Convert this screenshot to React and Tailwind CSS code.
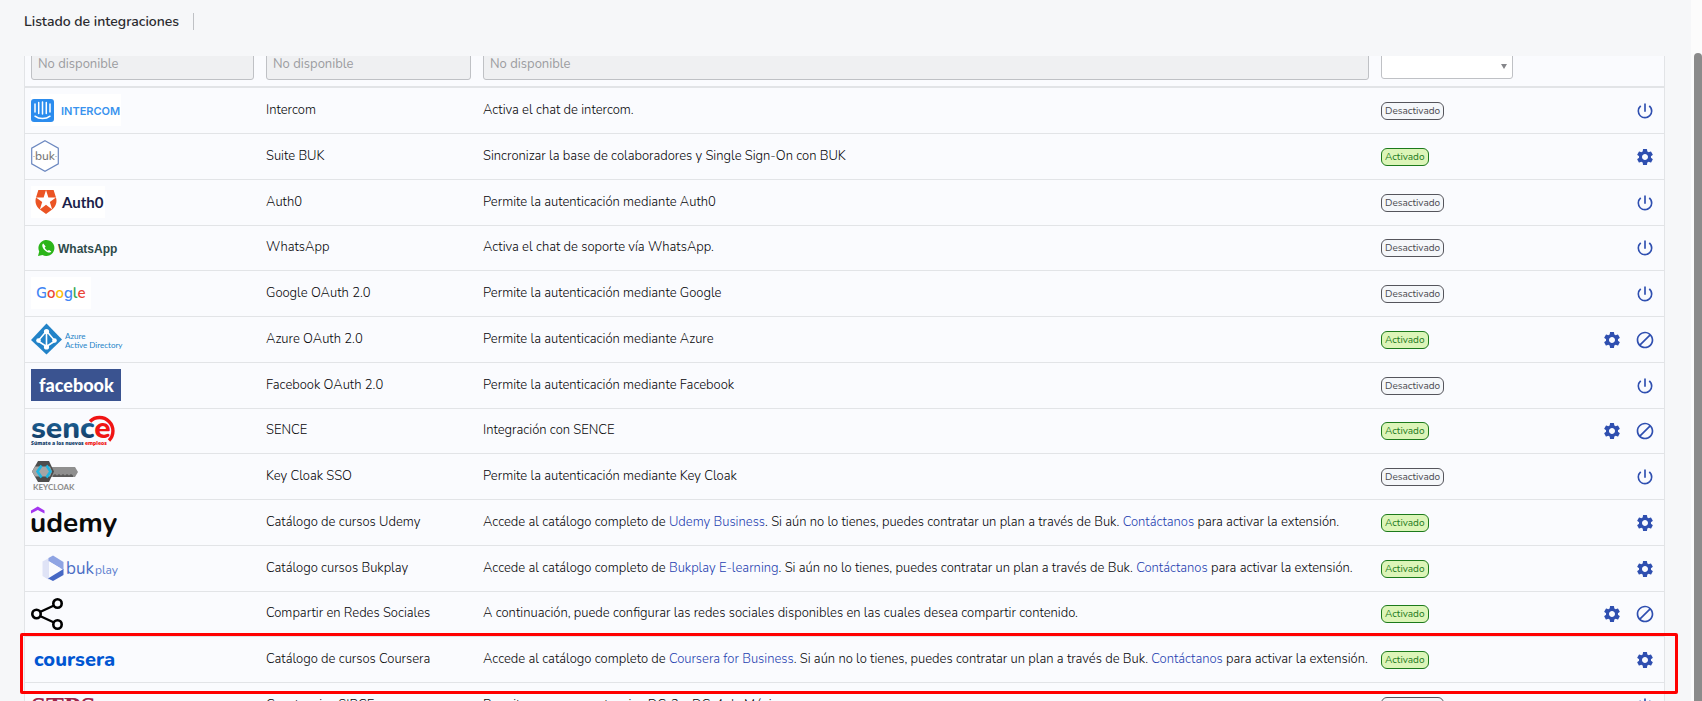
import { MdBlock, MdOutlinePowerSettingsNew, MdSettings } from "react-icons/md";

const IntercomLogo = () => (
  <svg width="90" height="32" viewBox="0 0 90 32" role="img" aria-label="Intercom" className="overflow-visible">
    <rect width="90" height="32" fill="#fff" />
    <rect y="5" width="23" height="23" rx="3" fill="#2b8cee" />
    <path d="M4 10v8M7.7 8.5v11M11.5 8v12M15.3 8.5v11M19 10v8M4 22.2c4 3.2 11 3.2 15 0" stroke="#fff" strokeWidth="1.5" fill="none" strokeLinecap="round" />
    <text x="30" y="21" fill="#3a93ee" className="font-[Inter] text-[11px] font-semibold">INTERCOM</text>
  </svg>
);

const BukLogo = () => (
  <svg width="28" height="32" viewBox="0 0 28 32" role="img" aria-label="Buk" className="overflow-visible">
    <path d="M14 .7 27.300 8.200v15.600L14 31.300.7 23.800V8.200z" fill="#fff" stroke="#6c88c0" strokeWidth="1.200" />
    <text x="14" y="20" textAnchor="middle" fill="#777" className="font-[Nunito,Lato] text-[12px] font-medium">buk</text>
    <path d="M2.500 16.500h1M24.500 16.500h1" stroke="#999" />
  </svg>
);

const Auth0Logo = () => (
  <svg width="74" height="32" viewBox="0 0 74 32" role="img" aria-label="Auth0" className="overflow-visible">
    <rect width="74" height="32" fill="#fff" />
    <path
      transform="translate(3 4)"
      d="M21.98 7.448L19.62 0H4.347L2.02 7.448c-1.352 4.312.03 9.206 3.815 12.015L12.007 24l6.157-4.552c3.755-2.81 5.182-7.688 3.815-12.015l-6.16 4.58 2.343 7.45-6.157-4.597-6.158 4.58 2.358-7.433-6.188-4.55 7.63-.045L12.008 0l2.356 7.404 7.615.044z"
      fill="#eb5424"
    />
    <text x="31" y="22" fill="#1b1f4b" className="font-[Lato] text-[15px] font-bold">Auth0</text>
  </svg>
);

const WhatsAppLogo = () => (
  <svg width="90" height="32" viewBox="0 0 90 32" role="img" aria-label="WhatsApp" className="overflow-visible">
    <path d="M7 24l1.200-4.500A8 8 0 1 1 11.500 23z" fill="#2bb519" />
    <path d="M12.300 11.500c-2 1-.8 4.500 1.500 6.800s5.500 3.200 6.500 1.200l-2.300-1.600-1.400.9c-1.500-.8-2.300-1.900-2.900-3.200l1-1.200z" fill="#fff" />
    <text x="27" y="21" fill="#2d4a4a" className="font-['Liberation_Sans'] text-[12px] font-bold">WhatsApp</text>
  </svg>
);

const GoogleLogo = () => (
  <svg width="60" height="32" viewBox="0 0 60 32" role="img" aria-label="Google" className="overflow-visible">
    <rect width="60" height="32" fill="#fff" />
    <text x="5" y="21" className="font-[Nunito,Lato] text-[15px] font-semibold">
      <tspan fill="#4285f4">G</tspan><tspan fill="#ea4335">o</tspan><tspan fill="#fbbc05">o</tspan><tspan fill="#4285f4">g</tspan><tspan fill="#34a853">l</tspan><tspan fill="#ea4335">e</tspan>
    </text>
  </svg>
);

const AzureLogo = () => (
  <svg width="94" height="32" viewBox="0 0 94 32" role="img" aria-label="Azure Active Directory" className="overflow-visible">
    <path d="M15.500.5 31 16.500 15.500 31.500 0 17z" fill="#2283c8" />
    <path d="M15.500 8 7 18l8.500 5.500L24 18z" fill="none" stroke="#fff" strokeWidth="1.600" />
    <path d="M15.500 8v16" stroke="#fff" strokeWidth="1.600" />
    <circle cx="15.500" cy="8.500" r="2.600" fill="#fff" />
    <circle cx="7.500" cy="17.500" r="2.300" fill="#fff" />
    <circle cx="23.500" cy="17.500" r="2.300" fill="#fff" />
    <circle cx="15.500" cy="24" r="2.600" fill="#fff" />
    <text x="34" y="16" fill="#2283c8" className="font-[Lato] text-[8px] font-normal">Azure</text>
    <text x="34" y="25" fill="#2283c8" className="font-[Lato] text-[8px] font-normal">Active Directory</text>
  </svg>
);

const FacebookLogo = () => (
  <svg width="90" height="32" viewBox="0 0 90 32" role="img" aria-label="Facebook" className="overflow-visible">
    <rect width="90" height="32" fill="#3a5390" />
    <text x="8" y="22.500" fill="#fff" className="font-[Lato] text-[18px] font-black">facebook</text>
  </svg>
);

const SenceLogo = () => (
  <svg width="90" height="32" viewBox="0 0 90 32" role="img" aria-label="SENCE" className="overflow-visible">
    <defs>
      <linearGradient id="sence" x1="0" y1="0" x2="0" y2="1">
        <stop offset="0.300" stopColor="#1d6296" />
        <stop offset="0.800" stopColor="#123a63" />
      </linearGradient>
    </defs>
    <text x="0" y="23" fill="url(#sence)" className="font-[Nunito,Lato] text-[30px] font-extrabold">
      senc<tspan fill="#f01414">e</tspan>
    </text>
    <path d="M59 6.500A12.800 12.800 0 1 1 78 25.500" fill="none" stroke="#f01414" strokeWidth="3.400" />
    <text x="0" y="30" fill="#15416b" className="font-['Noto_Sans'] text-[5px] font-black">Súmate a los nuevos <tspan fill="#f01414">empleos</tspan></text>
  </svg>
);

const KeycloakLogo = () => (
  <svg width="48" height="32" viewBox="0 0 48 32" role="img" aria-label="Keycloak" className="overflow-visible">
    <path d="M20 7h24l3 5-3 5H20z" fill="#8f8f8f" />
    <path d="M22 15.500l2-1.500 2 1.500 2-1.500 2 1.500 2-1.500 2 1.500 2-1.500 2 1.500 2-1.500 2 1.500V17H22z" fill="#5a5a5a" />
    <path d="M7 1h11l5 10.500L18 22H7L1 11.500z" fill="#4d4d4d" />
    <path d="M1 11.500 4 6.500h15l2 5-2 5H4z" fill="#a6a6a6" />
    <path d="M10.500 5.500 6.500 11.500l4 6M15.500 5.500l4 6-4 6" fill="none" stroke="#1fb5e0" strokeWidth="2.600" />
    <text x="2" y="30" fill="#8a8a8a" className="font-[Lato] text-[8px] font-bold">KEYCLOAK</text>
  </svg>
);

const UdemyLogo = () => (
  <svg width="90" height="34" viewBox="0 0 90 34" role="img" aria-label="Udemy" className="overflow-visible">
    <path d="M0 5.500 6.800 1.500l6.700 4v3L6.800 5 0 8.500z" fill="#a435f0" />
    <text x="-1" y="27" fill="#0b0b0b" className="font-[Nunito,Lato] text-[28px] font-bold">udemy</text>
  </svg>
);

const BukplayLogo = () => (
  <svg width="90" height="32" viewBox="0 0 90 32" role="img" aria-label="Bukplay" className="overflow-visible">
    <path d="M11.500 9.500 18 6v22l-6.500-4z" fill="#dfe3f6" />
    <path d="M17.500 6 22 3.500 32.500 10v8L17.500 9z" fill="#8fa4e3" />
    <path d="M32.500 17v6L22 29l-5-2.500z" fill="#4668c4" />
    <path d="M18 9.500 29 16 18 24.500z" fill="#fafbfe" />
    <text x="35" y="22" fill="#4a6dc4" className="font-[Nunito,Lato] text-[17px] font-normal">buk</text>
    <text x="64" y="22" fill="#5f7fce" className="font-[Nunito,Lato] text-[12px] font-normal">play</text>
  </svg>
);

const ShareLogo = () => (
  <svg width="32" height="32" viewBox="0 0 32 32" role="img" aria-label="Compartir" className="overflow-visible">
    <path d="M9 14 23 7.500M9 18l14 6.500" stroke="#000" strokeWidth="2.400" />
    <g fill="none" stroke="#000" strokeWidth="2.600">
      <circle cx="5.500" cy="16" r="4.200" />
      <circle cx="26.500" cy="5.500" r="4.200" />
      <circle cx="26.500" cy="26.500" r="4.200" />
    </g>
  </svg>
);

const CourseraLogo = () => (
  <svg width="90" height="32" viewBox="0 0 90 32" role="img" aria-label="Coursera" className="overflow-visible">
    <text x="3" y="23" fill="#0056d2" className="font-[Nunito,Lato] text-[20px] font-extrabold">coursera</text>
  </svg>
);

const StpsLogo = () => (
  <svg width="90" height="32" viewBox="0 0 90 32" role="img" aria-label="STPS" className="overflow-visible">
    <text x="0" y="27" fill="#9d2449" className="font-['Liberation_Serif'] text-[27px] font-bold">STPS</text>
  </svg>
);

const Ref = ({ children }) => (
  <a href="#" className="text-[#1f3fb0]">{children}</a>
);

const Catalog = ({ name }) => (
  <>
    Accede al catálogo completo de <Ref>{name}</Ref>. Si aún no lo tienes, puedes contratar un plan a través de Buk.{" "}
    <Ref>Contáctanos</Ref> para activar la extensión.
  </>
);

const rows = [
  { logo: IntercomLogo, name: "Intercom", text: "Activa el chat de intercom.", on: false, actions: ["power"] },
  { logo: BukLogo, name: "Suite BUK", text: "Sincronizar la base de colaboradores y Single Sign-On con BUK", on: true, actions: ["gear"] },
  { logo: Auth0Logo, name: "Auth0", text: "Permite la autenticación mediante Auth0", on: false, actions: ["power"] },
  { logo: WhatsAppLogo, name: "WhatsApp", text: "Activa el chat de soporte vía WhatsApp.", on: false, actions: ["power"] },
  { logo: GoogleLogo, name: "Google OAuth 2.0", text: "Permite la autenticación mediante Google", on: false, actions: ["power"] },
  { logo: AzureLogo, name: "Azure OAuth 2.0", text: "Permite la autenticación mediante Azure", on: true, actions: ["gear", "block"] },
  { logo: FacebookLogo, name: "Facebook OAuth 2.0", text: "Permite la autenticación mediante Facebook", on: false, actions: ["power"] },
  { logo: SenceLogo, name: "SENCE", text: "Integración con SENCE", on: true, actions: ["gear", "block"] },
  { logo: KeycloakLogo, name: "Key Cloak SSO", text: "Permite la autenticación mediante Key Cloak", on: false, actions: ["power"] },
  { logo: UdemyLogo, name: "Catálogo de cursos Udemy", text: <Catalog name="Udemy Business" />, on: true, actions: ["gear"] },
  { logo: BukplayLogo, name: "Catálogo cursos Bukplay", text: <Catalog name="Bukplay E-learning" />, on: true, actions: ["gear"] },
  { logo: ShareLogo, name: "Compartir en Redes Sociales", text: "A continuación, puede configurar las redes sociales disponibles en las cuales desea compartir contenido.", on: true, actions: ["gear", "block"] },
  { logo: CourseraLogo, name: "Catálogo de cursos Coursera", text: <Catalog name="Coursera for Business" />, on: true, actions: ["gear"], marked: true },
  { logo: StpsLogo, name: "Constancias SIRCE", text: "Permite generar constancias DC-3 y DC-4 de México", on: false, actions: ["power"] },
];

const actionKinds = {
  power: { label: "Activar", Icon: MdOutlinePowerSettingsNew },
  gear: { label: "Configurar", Icon: MdSettings },
  block: { label: "Desactivar", Icon: MdBlock },
};

const Status = ({ on }) => (
  <span
    className={
      on
        ? "inline-block rounded-md border border-[#1c7a1c] bg-[#dcf5b8] px-[3px] text-[10px] leading-4 font-normal text-[#1c7a1c]"
        : "inline-block rounded-md border border-[#55555c] bg-[#f5f7fa] px-[3px] text-[10px] leading-4 font-normal text-[#4a4a50]"
    }
  >
    {on ? "Activado" : "Desactivado"}
  </span>
);

const DisabledFilter = ({ label }) => (
  <input
    type="text"
    disabled
    aria-label={label}
    placeholder="No disponible"
    className="block h-[34px] w-full rounded-[3px] border border-[#bfc1c5] bg-[#eff0f2] px-[6px] pt-[2px] font-normal placeholder:text-[#9b9ca0]"
  />
);

export default function App() {
  return (
    <div className="flex h-screen overflow-hidden bg-[#f6f7f9] font-[Nunito,Lato,sans-serif] text-[13px] font-light text-[#050508]">
      <div className="flex min-w-0 flex-1 flex-col">
        <header className="flex h-14 shrink-0 items-start px-6 pt-[13px]">
          <h1 className="border-r border-[#bfc1c5] pr-[14px] text-[14px] leading-[17px] font-semibold text-[#2a2a2e]">Listado de integraciones</h1>
        </header>
        <main className="min-h-0 flex-1 overflow-hidden pr-[26px] pl-6">
          <table className="-mt-[14px] w-full table-fixed border-separate border-spacing-0 border-x border-[#e2e4e7] bg-[#fafbfe]">
            <colgroup>
              <col className="w-[235px]" />
              <col className="w-[217px]" />
              <col />
              <col className="w-[144px]" />
              <col className="w-[145px]" />
            </colgroup>
            <thead>
              <tr className="h-[46px] align-top [&>td]:border-b-2 [&>td]:border-[#e2e4e7] [&>td]:px-[6px] [&>td]:pt-1">
                <td><DisabledFilter label="Logo" /></td>
                <td><DisabledFilter label="Nombre" /></td>
                <td><DisabledFilter label="Descripción" /></td>
                <td>
                  <div className="relative">
                    <select aria-label="Estado" className="block h-[33px] w-full appearance-none rounded-[3px] border border-[#bfc1c5] bg-white px-2">
                      <option></option>
                      <option>Activado</option>
                      <option>Desactivado</option>
                    </select>
                    <svg viewBox="0 0 6 5" className="pointer-events-none absolute right-[6px] bottom-[10px] h-[5px] w-[6px]" fill="#85868a">
                      <path d="M0 0h6L3 5z" />
                    </svg>
                  </div>
                </td>
                <td></td>
              </tr>
            </thead>
            <tbody>
              {rows.map(({ logo: Logo, name, text, on, actions, marked }) => (
                <tr key={name} className="relative h-[46px] nth-[4n]:h-[45px] [&>td]:border-b [&>td]:border-[#e2e4e7] [&>td]:px-[6px]">
                  <td className="pt-[6px] align-top">
                    <div className="flex h-8 items-center">
                      <Logo />
                    </div>
                    {marked && <span className="pointer-events-none absolute -top-1 -right-[14px] -bottom-[11px] -left-[5px] z-10 rounded-[2px] border-3 border-[#ff0000]" />}
                  </td>
                  <td>{name}</td>
                  <td className="whitespace-nowrap">{text}</td>
                  <td><Status on={on} /></td>
                  <td>
                    <div className="flex justify-end gap-[13px] pr-[3px]">
                      {actions.map((kind) => {
                        const { label, Icon } = actionKinds[kind];
                        return (
                          <button key={kind} type="button" aria-label={label} className="text-[20px] text-[#2f4fb0]">
                            <Icon />
                          </button>
                        );
                      })}
                    </div>
                  </td>
                </tr>
              ))}
            </tbody>
          </table>
        </main>
      </div>
      <div className="flex w-[11px] flex-col bg-[#fcfcfc] pt-[53px] pl-[3px]">
        <div className="flex-1 rounded-t-[4px] bg-[#8b8b8b]" />
      </div>
    </div>
  );
}
